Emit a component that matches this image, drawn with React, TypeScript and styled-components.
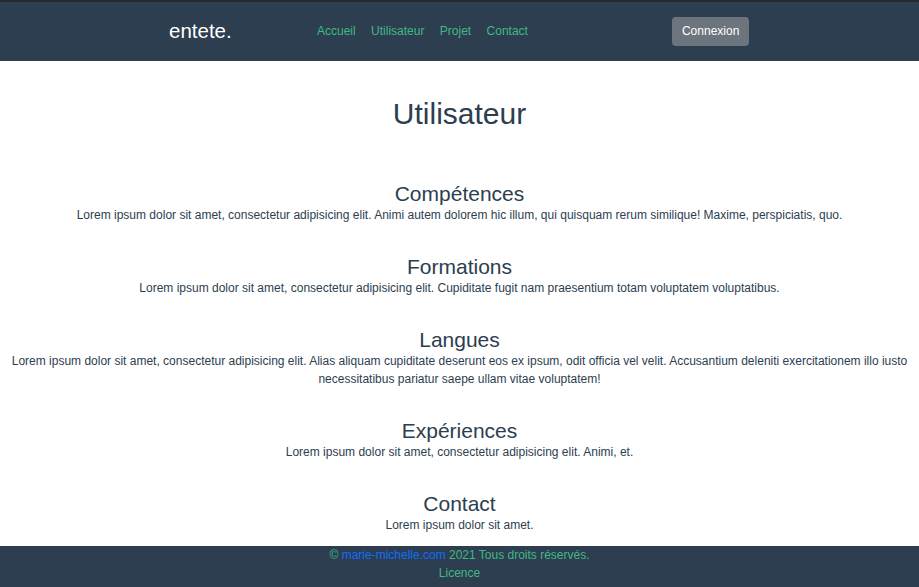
import React from "react";
import styled, { createGlobalStyle } from "styled-components";

const Global = createGlobalStyle`
  html, body { margin: 0; padding: 0; background: #ffffff; }
  body { font-family: "Liberation Sans", Arial, sans-serif; color: #2c3e50; }
  * { box-sizing: border-box; }
`;

const Page = styled.div`
  display: flex;
  flex-direction: column;
  min-height: 587px;
  border-top: 2px solid #252a30;
`;

const Header = styled.header`
  background: #2c3e50;
  height: 59px;
  display: flex;
  align-items: center;
  padding-left: 169px;
`;

const Logo = styled.div`
  color: #ffffff;
  font-size: 20.5px;
  width: 148px;
  margin-top: -2px;
`;

const NavLinks = styled.nav`
  display: flex;
  gap: 15.4px;
  margin-top: -1px;
`;

const NavLink = styled.a`
  color: #42b983;
  font-size: 12px;
  text-decoration: none;
`;

const LoginButton = styled.button`
  margin-left: 144px;
  background: #6c757d;
  color: #ffffff;
  border: none;
  border-radius: 4px;
  font-family: "Liberation Sans", Arial, sans-serif;
  font-size: 12px;
  height: 29px;
  padding: 0 10px;
  width: 77px;
  margin-top: -1px;
`;

const Main = styled.main`
  flex: 1;
  text-align: center;
  padding: 36px 8px 9px;
`;

const Title = styled.h1`
  font-size: 30px;
  font-weight: normal;
  margin: 0 0 51px;
  line-height: 34px;
`;

const Sections = styled.div`
  display: flex;
  flex-direction: column;
  gap: 31px;
`;

const Section = styled.section``;

const SectionTitle = styled.h3`
  font-size: 21px;
  font-weight: normal;
  margin: 0;
  line-height: 24px;
`;

const Text = styled.p`
  font-size: 12px;
  line-height: 18px;
  margin: 0;
`;

const Footer = styled.footer`
  background: #2c3e50;
  color: #42b983;
  text-align: center;
  font-size: 12px;
  line-height: 18px;
  padding: 0 0 5px;
`;

const FooterLink = styled.a`
  color: #0d6efd;
  text-decoration: none;
`;

const sections = [
  {
    title: "Compétences",
    text: "Lorem ipsum dolor sit amet, consectetur adipisicing elit. Animi autem dolorem hic illum, qui quisquam rerum similique! Maxime, perspiciatis, quo.",
  },
  {
    title: "Formations",
    text: "Lorem ipsum dolor sit amet, consectetur adipisicing elit. Cupiditate fugit nam praesentium totam voluptatem voluptatibus.",
  },
  {
    title: "Langues",
    text: "Lorem ipsum dolor sit amet, consectetur adipisicing elit. Alias aliquam cupiditate deserunt eos ex ipsum, odit officia vel velit. Accusantium deleniti exercitationem illo iusto necessitatibus pariatur saepe ullam vitae voluptatem!",
  },
  {
    title: "Expériences",
    text: "Lorem ipsum dolor sit amet, consectetur adipisicing elit. Animi, et.",
  },
  {
    title: "Contact",
    text: "Lorem ipsum dolor sit amet.",
  },
];

export default function App() {
  return (
    <Page>
      <Global />
      <Header>
        <Logo>entete.</Logo>
        <NavLinks>
          <NavLink href="#">Accueil</NavLink>
          <NavLink href="#">Utilisateur</NavLink>
          <NavLink href="#">Projet</NavLink>
          <NavLink href="#">Contact</NavLink>
        </NavLinks>
        <LoginButton>Connexion</LoginButton>
      </Header>
      <Main>
        <Title>Utilisateur</Title>
        <Sections>
          {sections.map((s) => (
            <Section key={s.title}>
              <SectionTitle>{s.title}</SectionTitle>
              <Text>{s.text}</Text>
            </Section>
          ))}
        </Sections>
      </Main>
      <Footer>
        <div>
          © <FooterLink href="#">marie-michelle.com</FooterLink> 2021 Tous droits réservés.
        </div>
        <div>Licence</div>
      </Footer>
    </Page>
  );
}
